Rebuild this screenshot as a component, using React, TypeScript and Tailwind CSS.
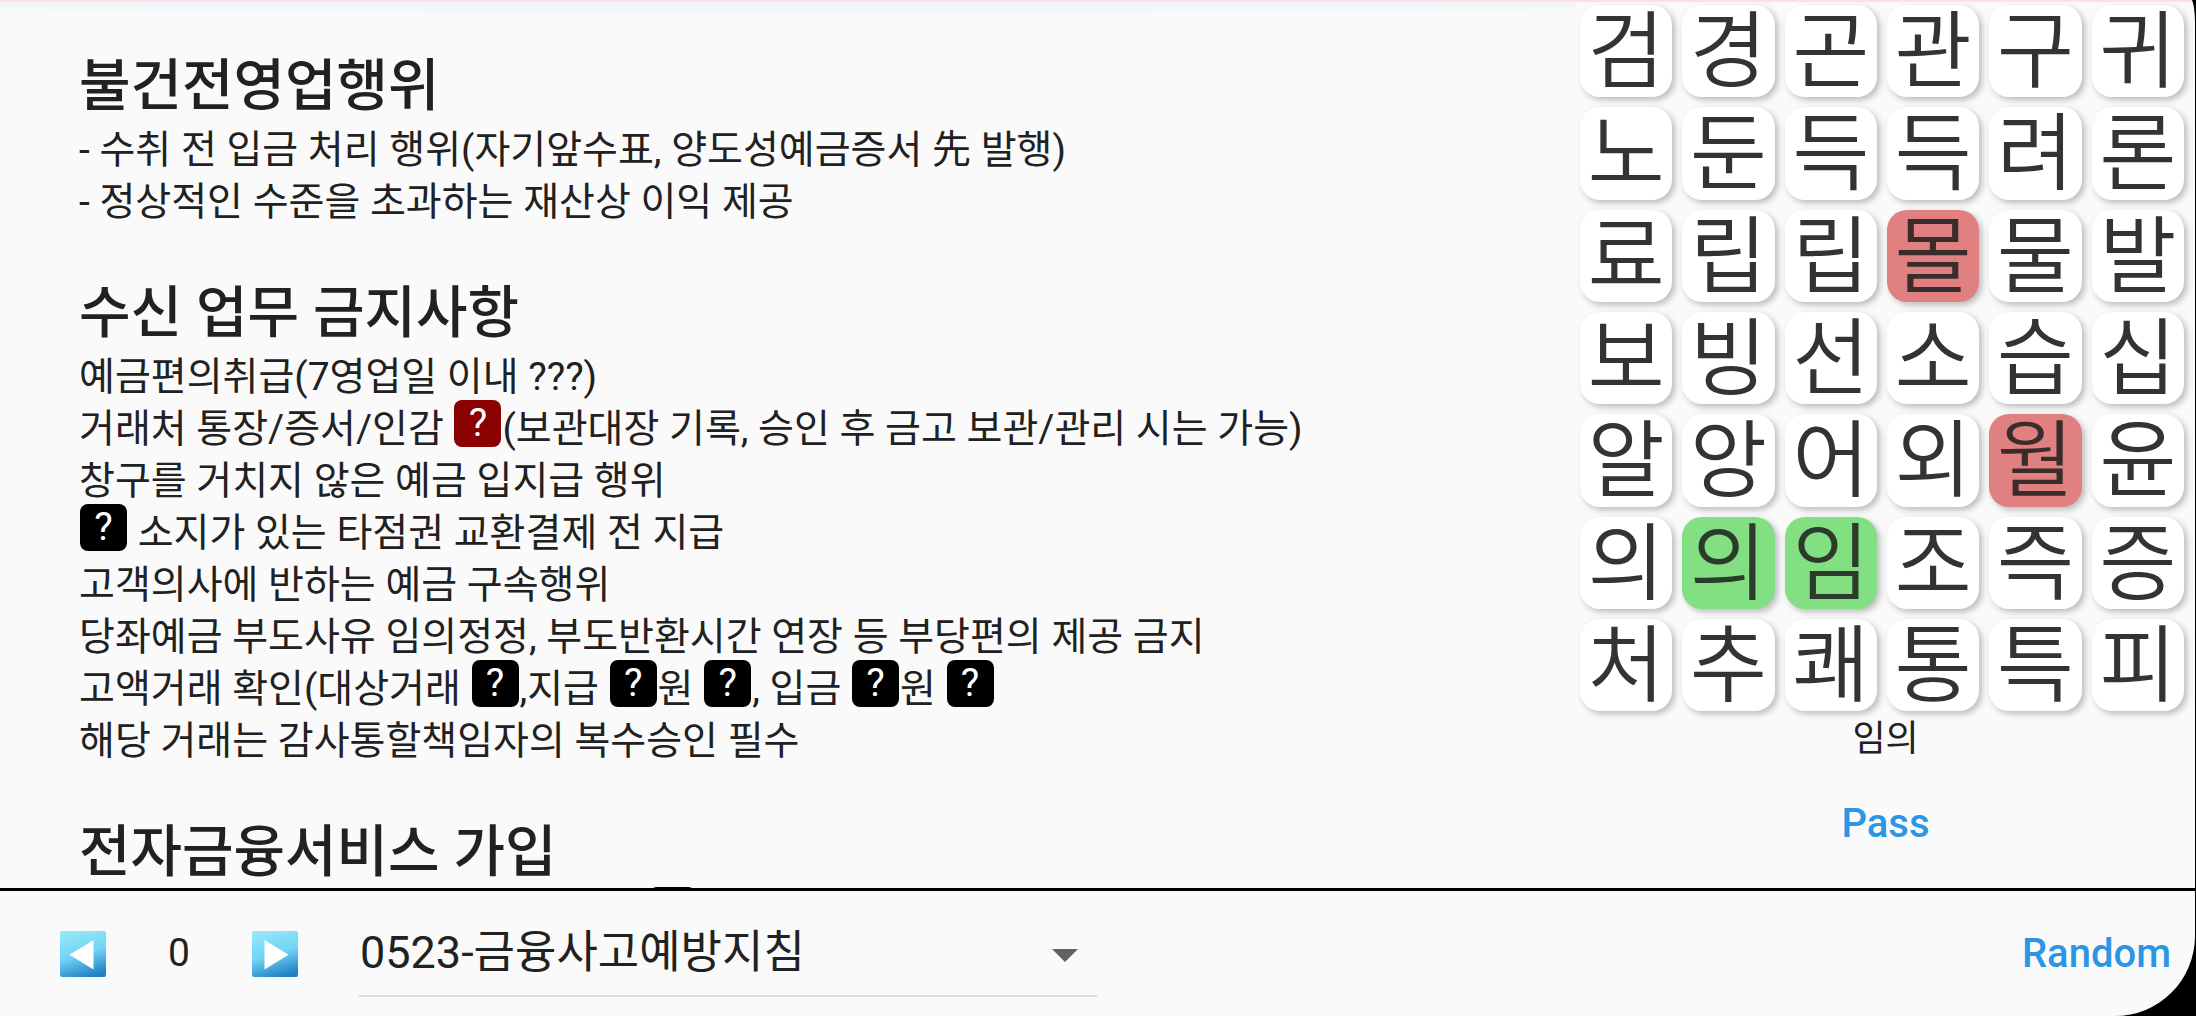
import { Fragment } from "react";
import type { ReactNode } from "react";

type Mark = "hit" | "miss" | undefined;

const tiles: { text: string; mark?: Mark }[] = [
  ..."검경곤관구귀노둔득득려론료립립".split("").map((text) => ({ text })),
  { text: "몰", mark: "miss" },
  ..."물발보빙선소습십알앙어외".split("").map((text) => ({ text })),
  { text: "월", mark: "miss" },
  ..."윤의".split("").map((text) => ({ text })),
  { text: "의", mark: "hit" },
  { text: "임", mark: "hit" },
  ..."조즉증처추쾌통특피".split("").map((text) => ({ text })),
];

function tileColor(mark: Mark) {
  if (mark === "miss") return "bg-[#e08080] text-[#3b2c2c]";
  if (mark === "hit") return "bg-[#82e082] text-[#2c3b2c]";
  return "bg-white text-[#333333]";
}

function Blank({ active = false }: { active?: boolean }) {
  return (
    <button
      type="button"
      aria-label="빈칸"
      className={
        "mx-px -mt-[3px] inline-flex size-[47px] items-center justify-center rounded-lg align-top leading-none text-white " +
        (active ? "bg-[#8b0000]" : "bg-black")
      }
    >
      ?
    </button>
  );
}

function Section({ title, lines }: { title: string; lines: ReactNode[] }) {
  return (
    <section>
      <h2 className="text-[56px] leading-[76px] font-medium">{title}</h2>
      <div className="text-[39px] leading-[52px]">
        {lines.map((line, i) => (
          <p key={i} className="h-[52px] whitespace-nowrap">
            {line}
          </p>
        ))}
      </div>
    </section>
  );
}

function ArrowIcon({ flip = false }: { flip?: boolean }) {
  const id = flip ? "sky-next" : "sky-prev";
  return (
    <svg viewBox="0 0 46 46" className="size-[46px]" aria-hidden="true">
      <defs>
        <linearGradient id={id} x1="0.35" y1="0" x2="0.65" y2="1">
          <stop offset="0" stopColor="#93e6f9" />
          <stop offset="0.5" stopColor="#71d3f5" />
          <stop offset="1" stopColor="#1f7fc6" />
        </linearGradient>
      </defs>
      <rect width="46" height="46" rx="2" fill={`url(#${id})`} />
      <path d={flip ? "M12.500 9v29.500L36.500 23.700z" : "M33.500 9v29.500L9.500 23.700z"} fill="#fff" />
    </svg>
  );
}

export default function App() {
  return (
    <div className="h-screen bg-black pr-px font-['Roboto','Noto_Sans_CJK_KR',sans-serif] text-[#212121]">
      <div className="flex h-full flex-col overflow-hidden rounded-tr-[4px_24px] rounded-br-[80px] bg-[#fafafa]">
        <main className="flex min-h-0 flex-1 border-t-2 border-[#fde0e3]">
          <article className="flex min-w-0 flex-1 flex-col gap-[47px] overflow-hidden bg-[radial-gradient(ellipse_65%_12px_at_50%_0,#f3f6fb_90%,transparent)] pt-[46px] pl-[79px]">
            <Section
              title="불건전영업행위"
              lines={["- 수취 전 입금 처리 행위(자기앞수표, 양도성예금증서 先 발행)", "- 정상적인 수준을 초과하는 재산상 이익 제공"]}
            />
            <Section
              title="수신 업무 금지사항"
              lines={[
                "예금편의취급(7영업일 이내 ???)",
                <Fragment>
                  거래처 통장/증서/인감 <Blank active />(보관대장 기록, 승인 후 금고 보관/관리 시는 가능)
                </Fragment>,
                "창구를 거치지 않은 예금 입지급 행위",
                <Fragment>
                  <Blank /> 소지가 있는 타점권 교환결제 전 지급
                </Fragment>,
                "고객의사에 반하는 예금 구속행위",
                "당좌예금 부도사유 임의정정, 부도반환시간 연장 등 부당편의 제공 금지",
                <Fragment>
                  고액거래 확인(대상거래 <Blank />,지급 <Blank />원 <Blank />, 입금 <Blank />원 <Blank />
                </Fragment>,
                "해당 거래는 감사통할책임자의 복수승인 필수",
              ]}
            />
            <Section
              title="전자금융서비스 가입"
              lines={[<span className="-mt-[3px] ml-[570px] block size-[47px] rounded-lg bg-black" />]}
            />
          </article>

          <aside className="flex w-[28.2%] shrink-0 flex-col items-center pt-[3px]">
            <div className="grid w-full grid-cols-6 gap-[10px] pr-[11px] pl-1">
              {tiles.map((tile, i) => (
                <button
                  key={i}
                  type="button"
                  className={
                    "flex aspect-square items-center justify-center rounded-[20px] pt-1 text-[84px] leading-none font-[350] shadow-[3px_3px_6px_rgba(0,0,0,0.25)] " +
                    tileColor(tile.mark)
                  }
                >
                  {tile.text}
                </button>
              ))}
            </div>
            <p className="mt-[2px] text-[36px] leading-[52px]">임의</p>
            <button type="button" className="mt-[33px] text-[40px] leading-[52px] font-medium text-[#2d95e5]">
              Pass
            </button>
          </aside>
        </main>

        <footer className="flex h-32 shrink-0 items-center border-t-3 border-black pr-6 pl-[60px]">
          <button type="button" aria-label="이전">
            <ArrowIcon />
          </button>
          <span className="w-[146px] text-center text-[39px]">0</span>
          <button type="button" aria-label="다음">
            <ArrowIcon flip />
          </button>
          <div className="relative ml-[61px] w-[738px] border-b-2 border-[#dddddd]">
            <select
              aria-label="문제집"
              className="block h-[84px] w-full appearance-none bg-transparent px-px text-[45px]"
              defaultValue="0523"
            >
              <option value="0523">0523-금융사고예방지침</option>
            </select>
            <svg viewBox="0 0 26 13" className="pointer-events-none absolute top-[38px] right-[19px] w-[26px]" aria-hidden="true">
              <path d="M0 0h26L13 13z" fill="#616161" />
            </svg>
          </div>
          <button type="button" className="ml-auto text-[40px] font-medium text-[#2d95e5]">
            Random
          </button>
        </footer>
      </div>
    </div>
  );
}
